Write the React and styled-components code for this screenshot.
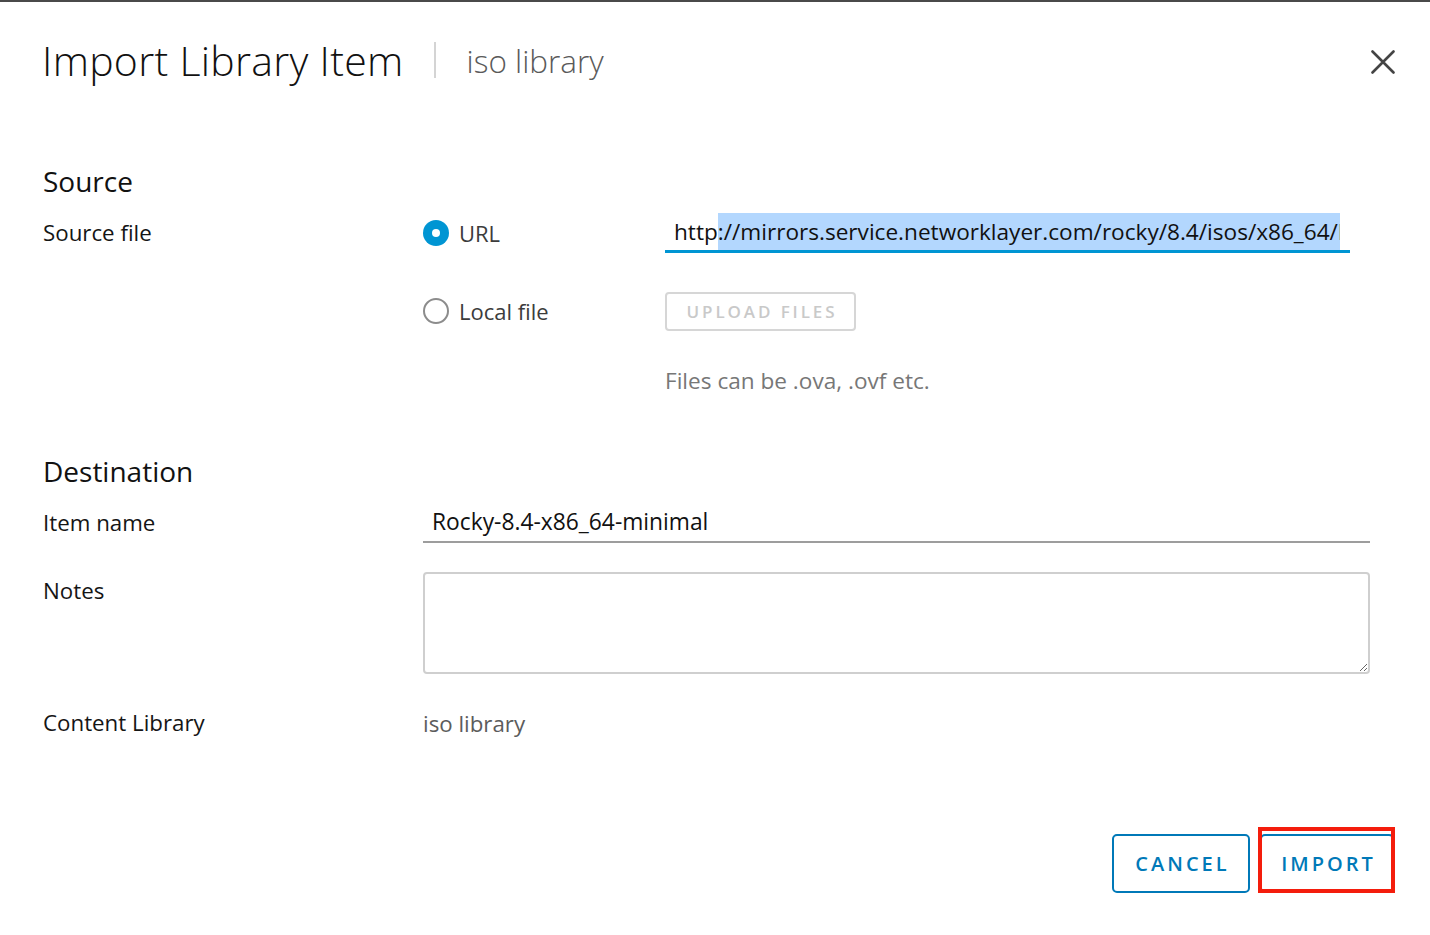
import React from "react";
import styled, { createGlobalStyle } from "styled-components";

const Global = createGlobalStyle`
  html, body { margin: 0; padding: 0; background: #fff; }
  body { font-family: "Open Sans", "Liberation Sans", sans-serif; color: #1b1b1b; }
  * { box-sizing: border-box; }
`;

const Page = styled.div`
  width: 1430px;
  height: 935px;
  overflow: hidden;
  display: flex;
  flex-direction: column;
`;

const TopEdge = styled.div`
  height: 2px;
  background: #4a4a4a;
`;

const Dialog = styled.div`
  flex: 1;
  display: flex;
  flex-direction: column;
  padding: 0 36px 0 43px;
`;

const Header = styled.header`
  height: 120px;
  display: flex;
  align-items: center;
  padding-bottom: 4px;
`;

const Title = styled.h1`
  margin: 0 0 0 -1px;
  font-size: 41px;
  font-weight: 300;
  color: #111;
  letter-spacing: 0.3px;
`;

const Divider = styled.span`
  width: 2px;
  height: 36px;
  background: #d4d4d4;
  margin: 0 31px 0 30px;
`;

const Subtitle = styled.span`
  font-size: 31.5px;
  font-weight: 300;
  color: #5a5a5a;
`;

const CloseBtn = styled.button`
  margin-left: auto;
  margin-right: -1px;
  margin-top: 4px;
  width: 24px;
  height: 24px;
  padding: 0;
  border: 0;
  background: none;
  display: flex;
  align-items: center;
  justify-content: center;
`;

const SectionTitle = styled.h2`
  margin: ${(p) => p.$top}px 0 0;
  height: 40px;
  display: flex;
  align-items: center;
  font-size: 28px;
  font-weight: 400;
  color: #111;
`;

const Row = styled.div`
  display: flex;
  align-items: ${(p) => (p.$top ? "flex-start" : "center")};
  min-height: 40px;
  margin-top: ${(p) => p.$mt || 0}px;
`;

const Label = styled.div`
  width: 380px;
  flex-shrink: 0;
  font-size: 22.3px;
  color: #151515;
  line-height: 40px;
  margin-top: ${(p) => p.$mt || 0}px;
`;

const RadioOpt = styled.div`
  width: 242px;
  display: flex;
  align-items: center;
  gap: 10px;
  font-size: 22px;
  color: #3c3c3c;
`;

const RadioCircle = styled.span`
  width: 26px;
  height: 26px;
  border-radius: 50%;
  display: inline-block;
  ${(p) =>
    p.$checked
      ? `background: #0095d3; border: 0; position: relative;
         &::after { content: ""; position: absolute; left: 9px; top: 9px; width: 8px; height: 8px; border-radius: 50%; background: #fff; }`
      : `border: 2px solid #8c8c8c; background: #fff;`}
`;

const UrlInput = styled.div`
  width: 685px;
  height: 40px;
  border-bottom: 3px solid #0095d3;
  padding: 0 10px 0 9px;
  display: flex;
`;

const UrlClip = styled.div`
  flex: 1;
  overflow: hidden;
  white-space: nowrap;
  font-size: 22.6px;
  line-height: 37px;
  color: #111;
`;

const Selected = styled.span`
  background: #b3d7fe;
  display: inline-block;
`;

const GhostButton = styled.button`
  width: 191px;
  height: 39px;
  border: 2px solid #d6d6d6;
  border-radius: 4px;
  background: #fff;
  color: #c9c9c9;
  font-family: inherit;
  font-size: 17px;
  font-weight: 600;
  letter-spacing: 2.9px;
  padding: 0 0 0 3px;
`;

const Helper = styled.div`
  margin: 37px 0 0 622px;
  font-size: 22.6px;
  color: #777;
  line-height: 26px;
`;

const TextLine = styled.div`
  width: 947px;
  height: 40px;
  border-bottom: 2px solid #9d9d9d;
  padding-left: 9px;
  font-size: 22.8px;
  line-height: 38px;
  color: #111;
`;

const Notes = styled.textarea`
  width: 947px;
  height: 102px;
  border: 2px solid #cfcfcf;
  border-radius: 4px;
  font-family: inherit;
  font-size: 20px;
  resize: vertical;
  outline: none;
`;

const Value = styled.div`
  font-size: 22.3px;
  color: #5c5c5c;
`;

const Footer = styled.div`
  margin-top: 91px;
  display: flex;
  justify-content: flex-end;
  gap: 10px;
`;

const OutlineButton = styled.button`
  position: relative;
  width: ${(p) => p.$w}px;
  height: 59px;
  border: 2px solid #0079b8;
  border-radius: 5px;
  background: #fff;
  color: #0079b8;
  font-family: inherit;
  font-size: 20px;
  font-weight: 600;
  letter-spacing: 3px;
  padding: 0 0 0 3px;
`;

const Highlight = styled.span`
  position: absolute;
  left: -4px;
  top: -9px;
  width: 137px;
  height: 66px;
  border: 4px solid #f41d0c;
  pointer-events: none;
`;

export default function App() {
  return (
    <Page>
      <Global />
      <TopEdge />
      <Dialog>
        <Header>
          <Title>Import Library Item</Title>
          <Divider />
          <Subtitle>iso library</Subtitle>
          <CloseBtn aria-label="close">
            <svg width="24" height="24" viewBox="0 0 24 24">
              <path d="M1.5 1.5 L22.5 22.5 M22.5 1.5 L1.5 22.5" stroke="#444" strokeWidth="2.6" strokeLinecap="round" />
            </svg>
          </CloseBtn>
        </Header>

        <SectionTitle $top={39}>Source</SectionTitle>
        <Row $mt={12}>
          <Label>Source file</Label>
          <RadioOpt>
            <RadioCircle $checked />
            URL
          </RadioOpt>
          <UrlInput>
            <UrlClip>
              http<Selected>://mirrors.service.networklayer.com/rocky/8.4/isos/x86_64/Rocky-8.4-x86_64-minimal.iso</Selected>
            </UrlClip>
          </UrlInput>
        </Row>
        <Row $mt={38}>
          <Label />
          <RadioOpt>
            <RadioCircle />
            Local file
          </RadioOpt>
          <GhostButton disabled>UPLOAD FILES</GhostButton>
        </Row>
        <Helper>Files can be .ova, .ovf etc.</Helper>

        <SectionTitle $top={57}>Destination</SectionTitle>
        <Row $mt={12}>
          <Label>Item name</Label>
          <TextLine>Rocky-8.4-x86_64-minimal</TextLine>
        </Row>
        <Row $top $mt={29}>
          <Label $mt={-1}>Notes</Label>
          <Notes readOnly />
        </Row>
        <Row $mt={29}>
          <Label>Content Library</Label>
          <Value>iso library</Value>
        </Row>

        <Footer>
          <OutlineButton $w={138}>CANCEL</OutlineButton>
          <OutlineButton $w={134}>
            IMPORT
            <Highlight />
          </OutlineButton>
        </Footer>
      </Dialog>
    </Page>
  );
}
